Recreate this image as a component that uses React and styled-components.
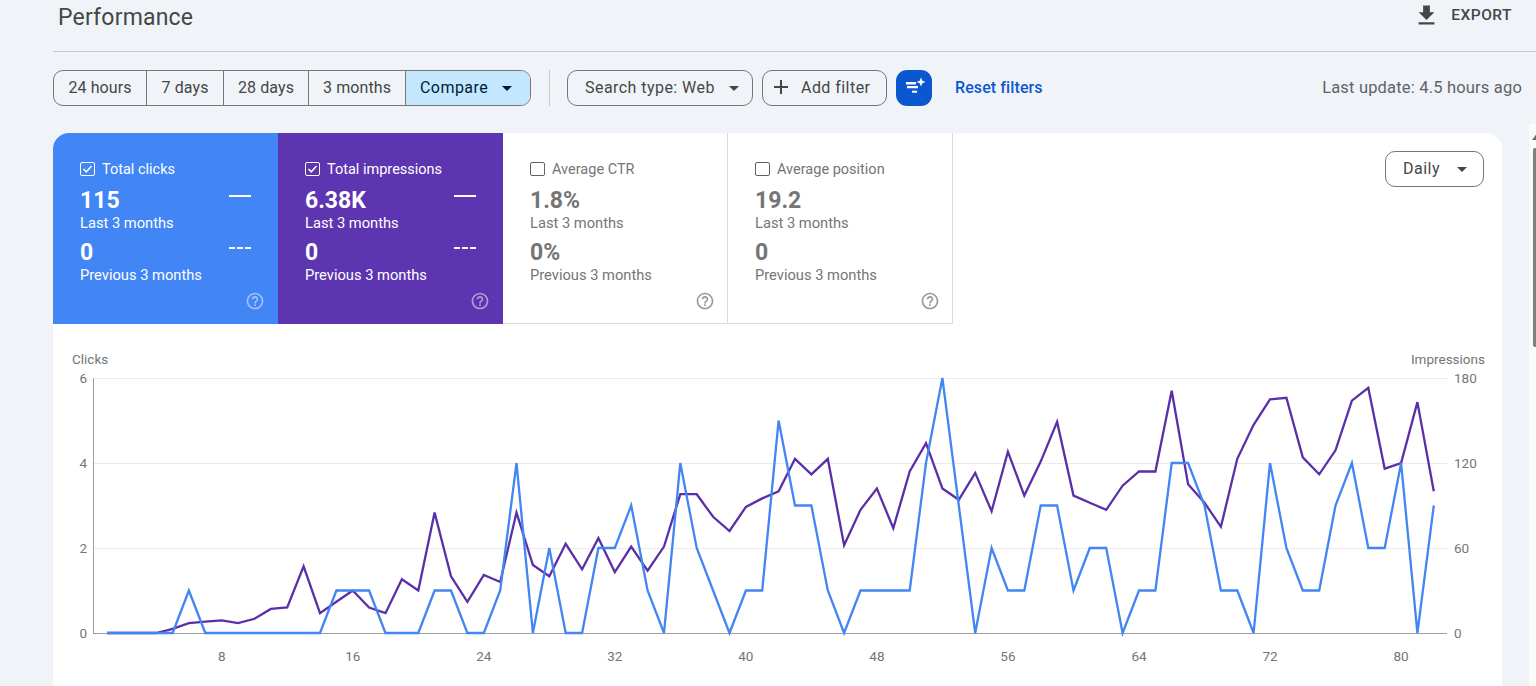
import styled, { createGlobalStyle } from "styled-components";

const GlobalStyle = createGlobalStyle`
  html, body {
    margin: 0;
    height: 100%;
    overflow: hidden;
    background: #f0f4f9;
  }

  body {
    font-family: Roboto, "Liberation Sans", sans-serif;
    color: #444746;
  }
`;

const Page = styled.div`
  height: 686px;
  padding-left: 53px;
  overflow: hidden;
  box-sizing: border-box;
`;

const Header = styled.header`
  display: flex;
  justify-content: space-between;
  height: 51px;
  padding: 0 24px 0 5px;
  border-bottom: 1px solid #c7c7c7;
`;

const Title = styled.h1`
  margin: 4px 0 0;
  font-size: 23px;
  line-height: 28px;
  font-weight: 400;
  letter-spacing: 0.2px;
  color: #444746;
`;

const ExportButton = styled.div`
  display: flex;
  align-items: flex-start;
  gap: 11px;
  padding-top: 2px;
  font-size: 15.5px;
  font-weight: 500;
  line-height: 27px;
  letter-spacing: 0.5px;
  color: #444746;
`;

const Toolbar = styled.div`
  display: flex;
  align-items: center;
  height: 36px;
  margin-top: 18px;
  padding-right: 14px;
`;

const RangeGroup = styled.div`
  display: flex;
  height: 36px;
  box-sizing: border-box;
  border: 1px solid #747775;
  border-radius: 10px;
  overflow: hidden;
`;

const RangeItem = styled.div`
  display: flex;
  align-items: center;
  justify-content: ${(props) => (props.$active ? "flex-start" : "center")};
  gap: 14px;
  width: ${(props) => props.$width}px;
  box-sizing: border-box;
  padding: 0 0 2px ${(props) => (props.$active ? "14px" : "0")};
  font-size: 16px;
  letter-spacing: ${(props) => (props.$active ? "0.45px" : "0.1px")};
  color: ${(props) => (props.$active ? "#001d35" : "#444746")};
  background: ${(props) => (props.$active ? "#c2e7ff" : "transparent")};
  border-left: ${(props) => (props.$first ? "none" : "1px solid #747775")};
`;

const Caret = styled.span`
  width: 0;
  height: 0;
  margin-top: 2px;
  border-left: 5px solid transparent;
  border-right: 5px solid transparent;
  border-top: 5px solid ${(props) => props.$color || "#444746"};
`;

const Divider = styled.div`
  width: 1px;
  height: 36px;
  margin: 0 17px 0 18px;
  background: #c7c7c7;
`;

const PillButton = styled.div`
  display: flex;
  align-items: center;
  gap: ${(props) => props.$gap}px;
  width: ${(props) => props.$width}px;
  height: 36px;
  margin-right: 9px;
  box-sizing: border-box;
  padding: 0 0 2px ${(props) => props.$pad}px;
  border: 1px solid #747775;
  border-radius: 10px;
  font-size: 16px;
  letter-spacing: 0.45px;
  color: #444746;
`;

const AiButton = styled.div`
  display: flex;
  align-items: center;
  justify-content: center;
  width: 36px;
  height: 36px;
  border-radius: 11px;
  background: #0b57d0;
`;

const ResetLink = styled.a`
  margin: 0 0 2px 23px;
  font-size: 16px;
  font-weight: 500;
  letter-spacing: 0.1px;
  color: #0b57d0;
`;

const LastUpdate = styled.div`
  margin: 0 0 2px auto;
  font-size: 16.5px;
  letter-spacing: 0.18px;
  color: #5f6368;
`;

const Card = styled.section`
  position: relative;
  height: 553px;
  margin: 27px 34px 0 0;
  background: #fff;
  border-radius: 16px 16px 0 0;
  overflow: hidden;
`;

const TopRow = styled.div`
  display: flex;
  justify-content: space-between;
  align-items: flex-start;
  padding-right: 18px;
`;

const Tiles = styled.div`
  display: flex;
`;

const Tile = styled.div`
  position: relative;
  width: 225px;
  height: 191px;
  box-sizing: border-box;
  padding: 27px 0 0 27px;
  background: ${(props) => props.$bg || "#fff"};
  color: ${(props) => (props.$bg ? "#fff" : "#757575")};
  border-right: ${(props) => (props.$bg ? "none" : "1px solid #dadce0")};
  border-bottom: ${(props) => (props.$bg ? "none" : "1px solid #dadce0")};
`;

const TileLabel = styled.div`
  display: flex;
  align-items: center;
  gap: 7px;
  height: 18px;
  font-size: 14.5px;
  line-height: 20px;
`;

const LabelText = styled.span`
  padding-top: 2px;
`;

const Check = styled.span`
  display: flex;
  align-items: center;
  justify-content: center;
  width: 15px;
  height: 14px;
  box-sizing: border-box;
  border: 1px solid ${(props) => (props.$on ? "#fff" : "#5f6368")};
  border-radius: 2px;
`;

const StatRow = styled.div`
  display: flex;
  justify-content: space-between;
  padding-right: 27px;
  margin-top: ${(props) => props.$top}px;
`;

const StatValue = styled.div`
  font-size: 23px;
  line-height: 27px;
  font-weight: 700;
`;

const StatCaption = styled.div`
  font-size: 14.7px;
  line-height: 18px;
`;

const Trend = styled.span`
  display: block;
  width: 22px;
  height: 0;
  margin-top: 8px;
  border-top: 2px ${(props) => (props.$dashed ? "dashed" : "solid")} currentColor;
`;

const HelpIcon = styled.svg`
  position: absolute;
  right: ${(props) => (props.$light ? "13px" : "12px")};
  bottom: ${(props) => (props.$light ? "13px" : "12px")};
  width: 20px;
  height: 20px;
  fill: ${(props) => (props.$light ? "rgba(255,255,255,0.5)" : "#9a9a9a")};
`;

const Daily = styled.div`
  display: flex;
  align-items: center;
  gap: 17px;
  width: 99px;
  height: 36px;
  margin-top: 18px;
  box-sizing: border-box;
  padding: 0 0 2px 17px;
  border: 1px solid #747775;
  border-radius: 10px;
  font-size: 16px;
  letter-spacing: 0.5px;
  color: #444746;
`;

const Chart = styled.svg`
  display: block;
  width: 1449px;
  height: 362px;
`;

const AxisText = styled.text`
  font-family: Roboto, "Liberation Sans", sans-serif;
  font-size: 13.5px;
  fill: #757575;
`;

const ScrollTrack = styled.div`
  position: absolute;
  top: 124px;
  right: 0;
  bottom: 0;
  width: 7px;
  background: #fbfbfc;
  overflow: hidden;
`;

const ScrollArrow = styled.span`
  position: absolute;
  top: 9px;
  left: 3px;
  border-left: 5px solid transparent;
  border-right: 5px solid transparent;
  border-bottom: 7px solid #6f6f6f;
`;

const ScrollThumb = styled.div`
  position: absolute;
  top: 24px;
  left: 4px;
  right: 0;
  height: 199px;
  border-radius: 2px 0 0 2px;
  background: #808080;
`;

const ranges = [
  { label: "24 hours", width: 92 },
  { label: "7 days", width: 77 },
  { label: "28 days", width: 85 },
  { label: "3 months", width: 97 },
];

const metrics = [
  { label: "Total clicks", value: "115", prev: "0", bg: "#4285f4", on: true },
  { label: "Total impressions", value: "6.38K", prev: "0", bg: "#5e35b1", on: true },
  { label: "Average CTR", value: "1.8%", prev: "0%" },
  { label: "Average position", value: "19.2", prev: "0" },
];

const clicks = [
  0, 0, 0, 0, 0, 1, 0, 0, 0, 0, 0, 0, 0, 0, 1, 1, 1, 0, 0, 0, 1, 1, 0, 0, 1, 4, 0, 2, 0, 0, 2,
  2, 3, 1, 0, 4, 2, 1, 0, 1, 1, 5, 3, 3, 1, 0, 1, 1, 1, 1, 4, 6, 3, 0, 2, 1, 1, 3, 3, 1, 2, 2,
  0, 1, 1, 4, 4, 3, 1, 1, 0, 4, 2, 1, 1, 3, 4, 2, 2, 4, 0, 3,
];

const impressions = [
  0, 0, 0, 0, 3, 7, 8, 9, 7, 10, 17, 18, 47, 14, 22, 30, 18, 14, 38, 30, 85, 40, 22, 41, 36, 85,
  48, 40, 63, 45, 67, 43, 61, 44, 61, 98, 98, 82, 72, 89, 95, 100, 123, 112, 123, 62, 87, 102,
  74, 114, 134, 102, 94, 113, 86, 128, 97, 121, 149, 97, 92, 87, 104, 114, 114, 171, 105, 92,
  75, 123, 147, 165, 166, 124, 112, 129, 164, 173, 116, 120, 163, 100,
];

const xAt = (day) => 221.7 + (day - 8) * 16.38;
const yAt = (value, max) => 633 - (value / max) * 255;
const toPoints = (data, max) =>
  data.map((v, i) => `${xAt(i + 1).toFixed(1)},${yAt(v, max).toFixed(1)}`).join(" ");

const HELP =
  "M11 18h2v-2h-2v2zm1-16C6.48 2 2 6.48 2 12s4.48 10 10 10 10-4.48 10-10S17.52 2 12 2zm0 18c-4.41 0-8-3.59-8-8s3.59-8 8-8 8 3.59 8 8-3.59 8-8 8zm0-14c-2.21 0-4 1.79-4 4h2c0-1.1.9-2 2-2s2 .9 2 2c0 2-3 1.75-3 5h2c0-2.25 3-2.5 3-5 0-2.21-1.79-4-4-4z";

const App = () => {
  return (
    <>
      <GlobalStyle />
      <Page>
        <Header>
          <Title>Performance</Title>
          <ExportButton>
            <svg width="27" height="27" viewBox="0 0 24 24" fill="#444746">
              <path d="M19 9h-4V3H9v6H5l7 7 7-7zM5 18v2h14v-2H5z" />
            </svg>
            EXPORT
          </ExportButton>
        </Header>

        <Toolbar>
          <RangeGroup>
            {ranges.map((r, i) => (
              <RangeItem key={r.label} $width={r.width} $first={i === 0}>
                {r.label}
              </RangeItem>
            ))}
            <RangeItem $active $width={125}>
              Compare <Caret $color="#001d35" />
            </RangeItem>
          </RangeGroup>
          <Divider />
          <PillButton $width={186} $gap={14} $pad={17}>
            Search type: Web <Caret />
          </PillButton>
          <PillButton $width={125} $gap={11} $pad={9}>
            <svg width="18" height="18" viewBox="0 0 18 18" fill="#444746">
              <path d="M8 2h2v6h6v2h-6v6H8v-6H2V8h6z" />
            </svg>
            Add filter
          </PillButton>
          <AiButton>
            <svg width="24" height="24" viewBox="0 0 24 24" fill="#fff">
              <path d="M4 6h10v2.500H4zM5 10h11v2.300H5zM10 14.700h5v2H10z" />
              <path d="M19 1.500l1.300 3.200L23.500 6l-3.200 1.300L19 10.500l-1.300-3.200L14.500 6l3.200-1.300z" />
            </svg>
          </AiButton>
          <ResetLink>Reset filters</ResetLink>
          <LastUpdate>Last update: 4.5 hours ago</LastUpdate>
        </Toolbar>

        <Card>
          <TopRow>
            <Tiles>
              {metrics.map((m) => (
                <Tile key={m.label} $bg={m.bg}>
                  <TileLabel>
                    <Check $on={m.on}>
                      {m.on && (
                        <svg width="11" height="10" viewBox="0 0 11 10" fill="none" stroke="#fff" strokeWidth="1.500">
                          <path d="M1.500 5l2.800 2.800L9.500 2" />
                        </svg>
                      )}
                    </Check>
                    <LabelText>{m.label}</LabelText>
                  </TileLabel>
                  <StatRow $top={9}>
                    <StatValue>{m.value}</StatValue>
                    {m.bg && <Trend />}
                  </StatRow>
                  <StatCaption>Last 3 months</StatCaption>
                  <StatRow $top={7}>
                    <StatValue>{m.prev}</StatValue>
                    {m.bg && <Trend $dashed />}
                  </StatRow>
                  <StatCaption>Previous 3 months</StatCaption>
                  <HelpIcon viewBox="0 0 24 24" $light={!!m.bg}>
                    <path d={HELP} />
                  </HelpIcon>
                </Tile>
              ))}
            </Tiles>
            <Daily>
              Daily <Caret />
            </Daily>
          </TopRow>

          <Chart viewBox="53 324 1449 362">
            <AxisText x="72" y="364">Clicks</AxisText>
            <AxisText x="1485" y="364" textAnchor="end">Impressions</AxisText>
            {[378, 463, 548].map((y) => (
              <line key={y} x1="93" x2="1447" y1={y + 0.5} y2={y + 0.5} stroke="#ebebeb" />
            ))}
            <line x1="93.500" x2="93.500" y1="378" y2="633" stroke="#9e9e9e" />
            <line x1="93" x2="1447" y1="633.500" y2="633.500" stroke="#9e9e9e" />
            {[6, 4, 2, 0].map((v) => (
              <AxisText key={v} x="87" y={yAt(v, 6) + 5} textAnchor="end">{v}</AxisText>
            ))}
            {[180, 120, 60, 0].map((v) => (
              <AxisText key={v} x="1454" y={yAt(v, 180) + 5}>{v}</AxisText>
            ))}
            {[8, 16, 24, 32, 40, 48, 56, 64, 72, 80].map((d) => (
              <AxisText key={d} x={xAt(d)} y="661" textAnchor="middle">{d}</AxisText>
            ))}
            <polyline points={toPoints(impressions, 180)} fill="none" stroke="#5a2fa8" strokeWidth="2.300" />
            <polyline points={toPoints(clicks, 6)} fill="none" stroke="#4285f4" strokeWidth="2.300" />
          </Chart>
        </Card>
      </Page>
      <ScrollTrack>
        <ScrollArrow />
        <ScrollThumb />
      </ScrollTrack>
    </>
  );
};

export default App;
